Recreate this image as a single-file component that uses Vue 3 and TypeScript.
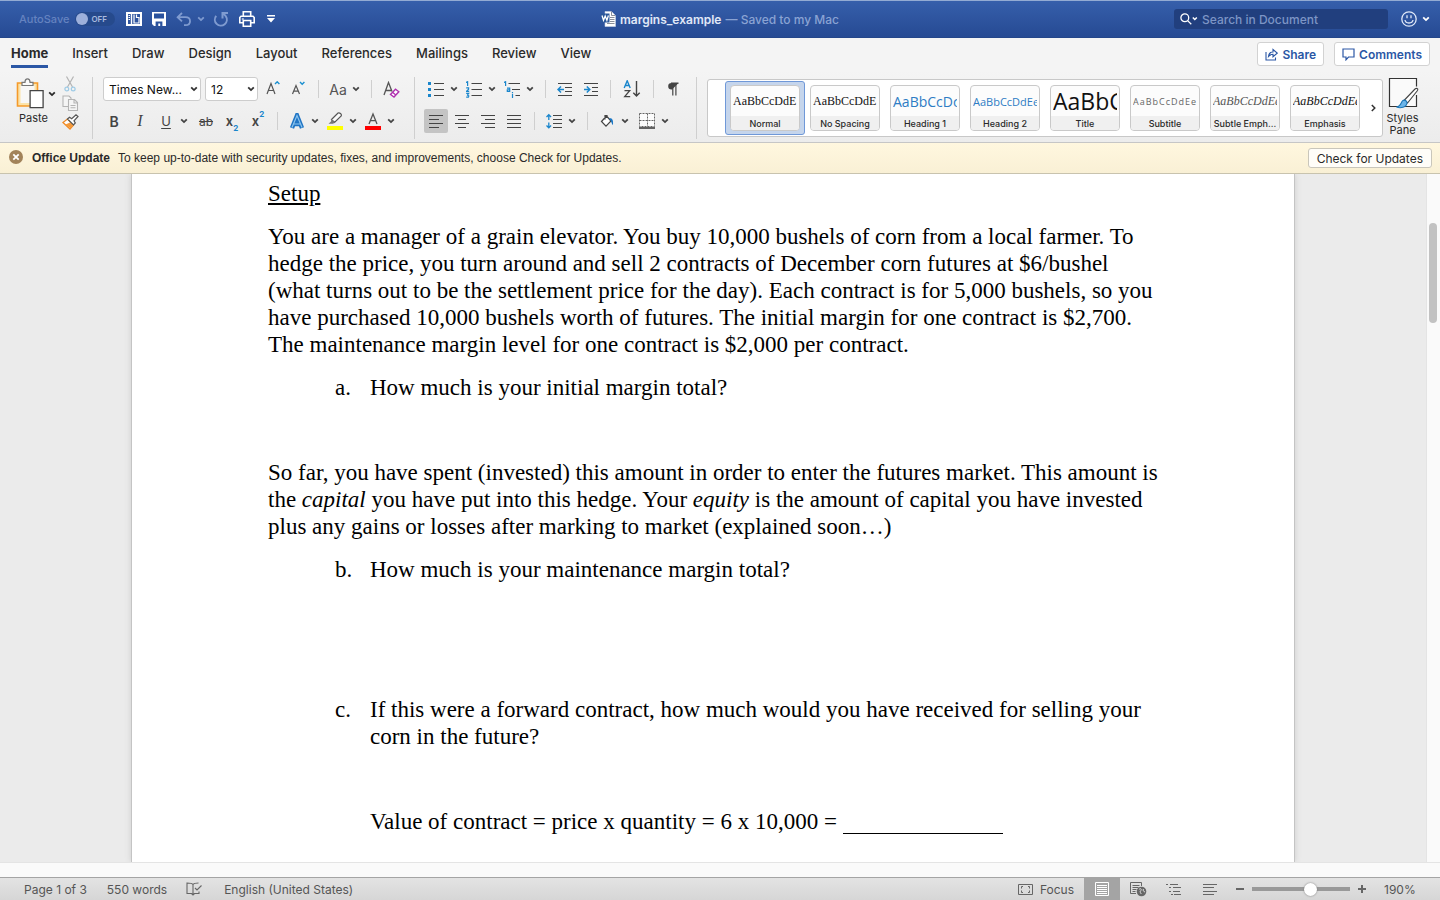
<script setup lang="ts">
import { h, ref } from 'vue'

interface StylePreset {
  name: string
  sample: string
  kind: string
}

const tabs: string[] = ['Home', 'Insert', 'Draw', 'Design', 'Layout', 'References', 'Mailings', 'Review', 'View']
const activeTab = ref('Home')

const presets: StylePreset[] = [
  { name: 'Normal', sample: 'AaBbCcDdE', kind: 'serif' },
  { name: 'No Spacing', sample: 'AaBbCcDdE', kind: 'serif' },
  { name: 'Heading 1', sample: 'AaBbCcDc', kind: 'heading-one' },
  { name: 'Heading 2', sample: 'AaBbCcDdEe', kind: 'heading-two' },
  { name: 'Title', sample: 'AaBbC', kind: 'title' },
  { name: 'Subtitle', sample: 'AaBbCcDdEe', kind: 'subtitle' },
  { name: 'Subtle Emph...', sample: 'AaBbCcDdEe', kind: 'subtle' },
  { name: 'Emphasis', sample: 'AaBbCcDdEe', kind: 'emphasis' },
]
const activePreset = ref('Normal')

const autoSave = ref(false)
const query = ref('')
const zoom = ref(61)
const alignment = ref('left')

const alignments = [
  { id: 'left', label: 'Align left', d: 'M1 2.5h14M1 6.5h10M1 10.5h14M1 14.5h10' },
  { id: 'center', label: 'Center', d: 'M1 2.5h14M4 6.5h8M1 10.5h14M4 14.5h8' },
  { id: 'right', label: 'Align right', d: 'M1 2.5h14M5 6.5h10M1 10.5h14M5 14.5h10' },
  { id: 'justify', label: 'Justify', d: 'M1 2.5h14M1 6.5h14M1 10.5h14M1 14.5h14' },
]

const Chevron = () =>
  h('svg', { width: 8, height: 6, viewBox: '0 0 8 6', fill: 'none', stroke: 'currentColor', 'stroke-width': 1.8 }, [
    h('path', { d: 'M1.2 1.3 4 4.1 6.8 1.3' }),
  ])
</script>

<template>
  <div class="app">
    <header class="titlebar">
      <div class="quick">
        <label class="autosave">
          <span>AutoSave</span>
          <span class="toggle">
            <input v-model="autoSave" type="checkbox" />
            <span class="toggle-text">OFF</span>
          </span>
        </label>
        <button class="tb" aria-label="Document templates">
          <svg width="16" height="14" viewBox="0 0 16 14" fill="none" stroke="#fff">
            <path d="M1 1h14v12H1z" stroke-width="2" />
            <path d="M5.500 1v12" stroke-width="1.400" />
            <path d="M2.500 3.500h1.500M2.500 5.500h1.500M2.500 7.500h1.500" stroke-width="1.100" />
            <path d="M8 2.500v8.500h5V5.500h-2.500V2.500" stroke-width="1.200" />
          </svg>
        </button>
        <button class="tb" aria-label="Save">
          <svg width="14" height="14" viewBox="0 0 14 14">
            <path d="M0 0h14v14H2l-2-2z" fill="#fff" />
            <path d="M2 1.600h10v4.900H2zM3.600 9.500h6.800V14H8.200v-2.600H6.300V14H3.600z" fill="#2a529d" />
          </svg>
        </button>
        <span class="split undo">
          <button class="tb dim" aria-label="Undo">
            <svg width="16" height="15" viewBox="0 0 16 15" fill="none" stroke="currentColor" stroke-width="1.800">
              <path d="M6 1 1.600 5.200 6 9.400M1.800 5.200h7.600c6.200 0 6.200 8 0 8H8" />
            </svg>
          </button>
          <button class="tb dim" aria-label="Undo history"><Chevron /></button>
        </span>
        <button class="tb dim" aria-label="Repeat">
          <svg width="16" height="16" viewBox="0 0 16 16" fill="none" stroke="currentColor" stroke-width="2">
            <path d="M3.200 4.800A6 6 0 1 0 12.800 5.200C12 4 11 3 9.500 2.500M9.500 7.500V2h5.500" />
          </svg>
        </button>
        <button class="tb" aria-label="Print">
          <svg width="16" height="16" viewBox="0 0 16 16" fill="none" stroke="#fff" stroke-width="1.600">
            <path d="M4.300 5V.8h7.400V5M4 11.700H.8V6.500L2 5.300h12l1.200 1.200v5.200H12M4.300 9.500h7.400v5.700H4.300z" />
            <path d="M2.800 8h2" stroke-width="1.200" />
          </svg>
        </button>
        <button class="tb more" aria-label="Customize toolbar">
          <svg width="8" height="8" viewBox="0 0 8 8"><path d="M0 0h8v1.500H0zM0 3h8L4 7.500z" fill="#fff" /></svg>
        </button>
      </div>
      <div class="doc-title">
        <svg width="15" height="16" viewBox="0 0 15 16">
          <path d="M4 .5h6.500L14.500 4.500v11H4z" fill="#fff" stroke="#c9d3e6" stroke-width=".6" />
          <path d="M10.500.5v4h4M9 6.500h4.500M9 8.500h4.500M9 10.500h4.500M6 12.500h7.500" stroke="#6d7480" stroke-width=".8" fill="none" />
          <path d="M0 2.500h8.500v9H0z" fill="#2b579a" />
          <path d="m1 4.500 1.500 4.800L4.200 5l1.700 4.300L7.400 4.500" fill="none" stroke="#fff" stroke-width="1.300" />
        </svg>
        <span class="name">margins_example</span>
        <span class="saved">— Saved to my Mac</span>
      </div>
      <div class="title-right">
        <label class="search">
          <svg width="18" height="12" viewBox="0 0 18 12" fill="none" stroke="#fff" stroke-width="1.300">
            <circle cx="4.800" cy="4.800" r="3.900" />
            <path d="m7.600 7.600 3.700 3.700" /><path d="m12.800 4.500 2 2 2-2" stroke-width="1.500" />
          </svg>
          <input v-model="query" type="text" placeholder="Search in Document" aria-label="Search in Document" />
        </label>
        <button class="tb face" aria-label="Feedback">
          <svg width="16" height="16" viewBox="0 0 16 16" fill="none" stroke="#dfe8f8" stroke-width="1.300">
            <circle cx="8" cy="8" r="7.200" /><path d="M4 9c.6 4 7.400 4 8 0M6 4.300v3M10 4.300v3" />
          </svg>
          <Chevron />
        </button>
      </div>
    </header>

    <nav class="tabs">
      <button
        v-for="t in tabs"
        :key="t"
        class="tab"
        :class="{ active: activeTab === t }"
        @click="activeTab = t"
      >
        {{ t }}
      </button>
      <span class="spacer"></span>
      <button class="pill">
        <svg width="13" height="13" viewBox="0 0 13 13" fill="none" stroke="currentColor" stroke-width="1.100">
          <path d="M1 4v8h9.500V9.500M3.500 8.500C3.800 5.500 5.500 4 8 4V1.500l4.200 3.600L8 8.700V6.300c-2 0-3.200.5-4.500 2.200z" />
        </svg>
        Share
      </button>
      <button class="pill">
        <svg width="13" height="13" viewBox="0 0 13 13" fill="none" stroke="currentColor" stroke-width="1.200">
          <path d="M1 1h11v8H6.500L4 11.800V9H1z" />
        </svg>
        Comments
      </button>
    </nav>

    <section class="ribbon">
      <div class="clipboard">
        <button class="paste">
          <span class="paste-top">
            <svg width="28" height="31" viewBox="0 0 28 31" fill="none">
              <path d="M1.500 5h20v23H1.500z" fill="#fbe3a9" stroke="#f59a2a" stroke-width="1.600" />
              <path d="M4.500 7.500h14V25h-14z" fill="#f7f7f7" />
              <path d="M6 7.500V4.300h3C9-.2 14-.2 14 4.300h3v3.200z" fill="#fafafa" stroke="#777" stroke-width="1.200" />
              <path d="M14.100 12.600h13v17h-13z" fill="#fff" stroke="#444" stroke-width="1.300" />
            </svg>
            <Chevron />
          </span>
          Paste
        </button>
        <div class="clip-col">
          <button class="ib" aria-label="Cut">
            <svg width="12" height="16" viewBox="0 0 12 16" fill="none" stroke="#b4b4b4" stroke-width="1.200">
              <path d="M2.500.5 8.500 11M9.500.5 3.500 11" />
              <circle cx="2.800" cy="13" r="1.900" stroke="#9ecbe6" /><circle cx="9.200" cy="13" r="1.900" stroke="#9ecbe6" />
            </svg>
          </button>
          <button class="ib" aria-label="Copy">
            <svg width="17" height="16" viewBox="0 0 17 16" fill="#f5f5f5" stroke="#b4b4b4" stroke-width="1.100">
              <path d="M1 1h6l2 2v8.500H1z" /><path d="M6.500 4.500h6l3 3v8h-9zM12 4.500V8h3.500M8.500 10.500h5M8.500 12.800h5" />
            </svg>
          </button>
          <button class="ib" aria-label="Format painter">
            <svg width="17" height="16" viewBox="0 0 17 16">
              <path d="M1 8.500 5.500 5l6 6L8 15z" fill="#fff" stroke="#f08a24" stroke-width="1.300" />
              <path d="m3.500 10.500 5 4L11 11 8 8.500z" fill="#f59a3a" />
              <path d="m5.500 5 2-1.800 2.200 1.600L14 .8l2 1.700-4 4.300 1.300 2.200-1.800 2z" fill="#fff" stroke="#555" stroke-width="1.200" />
            </svg>
          </button>
        </div>
      </div>

      <span class="divider"></span>

      <div class="group">
        <div class="row wide">
          <label class="combo font-name">
            <select aria-label="Font"><option>Times New...</option></select>
            <Chevron />
          </label>
          <label class="combo font-size">
            <select aria-label="Font size"><option>12</option></select>
            <Chevron />
          </label>
          <span class="grow-pair">
            <button class="ib" aria-label="Increase font size">
              <svg width="16" height="16" viewBox="0 0 16 16" fill="none">
                <path d="M2 13 6 2.500 10 13M3.500 9.500h5" stroke="#555" stroke-width="1.200" />
                <path d="m10 3 2.200-2.200L14.400 3" stroke="#1a8fd0" stroke-width="1.400" />
              </svg>
            </button>
            <button class="ib" aria-label="Decrease font size">
              <svg width="16" height="16" viewBox="0 0 16 16" fill="none">
                <path d="M1.500 13 5 4.500 8.500 13M2.700 10.200h4.600" stroke="#555" stroke-width="1.200" />
                <path d="m9 1 2.200 2.200L13.400 1" stroke="#1a8fd0" stroke-width="1.400" />
              </svg>
            </button>
          </span>
          <span class="sep"></span>
          <span class="split">
            <button class="ib case" aria-label="Change case">Aa</button>
            <button class="ch" aria-label="Case options"><Chevron /></button>
          </span>
          <span class="sep"></span>
          <button class="ib" aria-label="Clear formatting">
            <svg width="17" height="17" viewBox="0 0 17 17" fill="none">
              <path d="M1 14 5.500 1.500 9 10.500M2.600 9.500h5.500" stroke="#555" stroke-width="1.300" />
              <path d="m7.500 13.500 5-5.300 3.300 2.600L11 16z" fill="#fff" stroke="#b030b0" stroke-width="1.400" />
              <path d="m9.500 11.200 3.300 2.900" stroke="#b030b0" stroke-width="1.300" />
            </svg>
          </button>
        </div>
        <div class="row wide">
          <button class="ib bold">B</button>
          <button class="ib italic">I</button>
          <span class="split">
            <button class="ib under">U</button>
            <button class="ch" aria-label="Underline options"><Chevron /></button>
          </span>
          <button class="ib strike">ab</button>
          <button class="ib script" aria-label="Subscript">
            <span>x</span><small class="down">2</small>
          </button>
          <button class="ib script" aria-label="Superscript">
            <span>x</span><small class="up">2</small>
          </button>
          <span class="sep"></span>
          <span class="tight">
            <span class="split">
              <button class="ib" aria-label="Text effects">
                <svg width="16" height="16" viewBox="0 0 16 16" fill="none">
                  <path d="M3 15 8 2.500 13 15M5 11h6" stroke="#1f74c4" stroke-width="4.400" />
                  <path d="M3 14.500 8 2.500l5 12M5 11h6" stroke="#8cc4ee" stroke-width="1.200" />
                </svg>
              </button>
              <button class="ch" aria-label="Effect options"><Chevron /></button>
            </span>
            <span class="split">
              <button class="ib" aria-label="Highlight">
                <svg width="16" height="18" viewBox="0 0 16 18">
                  <path d="m4.500 7.500 6.500-6.500c1.500-.8 4 1 3.200 3L7.500 10.500z" fill="#fafafa" stroke="#555" stroke-width="1.200" />
                  <path d="M4.500 7 8 10.500l-2 1.300-4.500 0L4 9.500z" fill="#777" />
                  <path d="M0 14h16v4H0z" fill="#ff0" />
                </svg>
              </button>
              <button class="ch" aria-label="Highlight colors"><Chevron /></button>
            </span>
            <span class="split">
              <button class="ib" aria-label="Font color">
                <svg width="16" height="18" viewBox="0 0 16 18">
                  <path d="M4 12 8 2l4 10M5.300 8.600h5.400" fill="none" stroke="#555" stroke-width="1.300" />
                  <path d="M0 14h16v4H0z" fill="#f00" />
                </svg>
              </button>
              <button class="ch" aria-label="Font colors"><Chevron /></button>
            </span>
          </span>
        </div>
      </div>

      <span class="divider"></span>

      <div class="group">
        <div class="row">
          <span class="split">
            <button class="ib" aria-label="Bullets">
              <svg width="16" height="16" viewBox="0 0 16 16">
                <path d="M0 1h3v3H0zM0 7h3v3H0zM0 13h3v3H0z" fill="#1a86cc" />
                <path d="M6 2.500h10M6 8.500h10M6 14.500h10" stroke="#444" stroke-width="1.200" />
              </svg>
            </button>
            <button class="ch" aria-label="Bullet library"><Chevron /></button>
          </span>
          <span class="split">
            <button class="ib" aria-label="Numbering">
              <svg width="16" height="17" viewBox="0 0 16 17" fill="none">
                <path d="M0 1.500 1.600.7V5M.2 6.900h2.400v1.300L.5 10.400h2.700M.2 12.400h2.500L1.500 14l1.300.9-.4 1.300H.2" stroke="#1a86cc" stroke-width="1.200" />
                <path d="M5.500 2.500H16M5.500 8.500H16M5.500 14.500H16" stroke="#444" stroke-width="1.200" />
              </svg>
            </button>
            <button class="ch" aria-label="Numbering library"><Chevron /></button>
          </span>
          <span class="split">
            <button class="ib" aria-label="Multilevel list">
              <svg width="16" height="17" viewBox="0 0 16 17" fill="none">
                <path d="M0 1.500 1.600.7V5M3 7.200h2.700v3.300H3.300V8.800h2.400M8.500 13v4M8.500 11v1.200" stroke="#1a86cc" stroke-width="1.200" />
                <path d="M4.500 2.500H16M8 8.500h8M11.500 14.500H16" stroke="#444" stroke-width="1.200" />
              </svg>
            </button>
            <button class="ch" aria-label="List library"><Chevron /></button>
          </span>
          <span class="sep"></span>
          <span class="row wide">
            <button class="ib" aria-label="Decrease indent">
              <svg width="16" height="16" viewBox="0 0 16 16" fill="none">
                <path d="M1 2.500h14M8 6.500h7M8 10.500h7M1 14.500h14" stroke="#444" stroke-width="1.200" />
                <path d="M7 8.500H1.500M4 5.500l-3 3 3 3" stroke="#1a86cc" stroke-width="1.500" />
              </svg>
            </button>
            <button class="ib" aria-label="Increase indent">
              <svg width="16" height="16" viewBox="0 0 16 16" fill="none">
                <path d="M1 2.500h14M9 6.500h6M9 10.500h6M1 14.500h14" stroke="#444" stroke-width="1.200" />
                <path d="M1 8.500h5.500M3.800 5.500l3 3-3 3" stroke="#1a86cc" stroke-width="1.500" />
              </svg>
            </button>
          </span>
          <span class="sep"></span>
          <button class="ib sort" aria-label="Sort">
            <svg width="18" height="18" viewBox="0 0 18 18" fill="none">
              <path d="M1.200 8 4.200.8 7.200 8M2.200 5.500h4" stroke="#1a86cc" stroke-width="1.400" />
              <path d="M1.500 10.600h5.200l-5 6h5.500" stroke="#444" stroke-width="1.300" />
              <path d="M13.500 1v15M10.300 12.800l3.200 3.200 3.200-3.200" stroke="#444" stroke-width="1.400" />
            </svg>
          </button>
          <span class="sep"></span>
          <button class="ib" aria-label="Show formatting marks">
            <svg width="12" height="14" viewBox="0 0 12 14">
              <path d="M11.500 1H4.500a3.300 3.300 0 0 0 0 6.600H5z" fill="#444" />
              <path d="M5.800 1v12.500M8.900 1v12.500M4 1.200h7.500" stroke="#444" stroke-width="1.200" fill="none" />
            </svg>
          </button>
        </div>
        <div class="row second">
          <button
            v-for="a in alignments"
            :key="a.id"
            class="ib align"
            :class="{ on: alignment === a.id }"
            :aria-label="a.label"
            @click="alignment = a.id"
          >
            <svg width="16" height="16" viewBox="0 0 16 16" fill="none" stroke="#444" stroke-width="1.200">
              <path :d="a.d" />
            </svg>
          </button>
          <span class="sep"></span>
          <span class="split">
            <button class="ib" aria-label="Line spacing">
              <svg width="16" height="16" viewBox="0 0 16 16" fill="none">
                <path d="M7 2.500h9M7 6.500h9M7 10.500h9M7 14.500h9" stroke="#444" stroke-width="1.200" />
                <path d="M2.800 2v5M.5 4 2.800 1.700 5.100 4M2.800 9.500v5M.5 12.500l2.300 2.300 2.300-2.300" stroke="#1a86cc" stroke-width="1.300" />
              </svg>
            </button>
            <button class="ch" aria-label="Spacing options"><Chevron /></button>
          </span>
          <span class="sep"></span>
          <span class="row wide">
            <span class="split">
              <button class="ib" aria-label="Shading">
                <svg width="14" height="14" viewBox="0 0 14 14" fill="none">
                  <path d="m1.500 7.500 5-5.500 4.500 5-5 5.200zM5 5.500V1.500h2V4" fill="#fff" stroke="#444" stroke-width="1.200" />
                  <path d="M9 4.500c3-1 4.500 1 4 6.500-1 0-1.500-3-2.500-4.500z" fill="#1a76c4" />
                </svg>
              </button>
              <button class="ch" aria-label="Shading colors"><Chevron /></button>
            </span>
            <span class="split">
              <button class="ib" aria-label="Borders">
                <svg width="16" height="16" viewBox="0 0 16 16" fill="#fcfcfc" stroke="#666">
                  <path d="M.5.500h15v13H.5zM8.500.5v13M.5 7.500h15" stroke-dasharray="2 1" />
                  <path d="M0 15h16" stroke="#333" stroke-width="1.500" />
                </svg>
              </button>
              <button class="ch" aria-label="Border options"><Chevron /></button>
            </span>
          </span>
        </div>
      </div>

      <span class="divider last"></span>

      <div class="gallery">
        <button
          v-for="p in presets"
          :key="p.name"
          class="tile"
          :class="{ on: activePreset === p.name }"
          @click="activePreset = p.name"
        >
          <span class="card">
            <span class="sample"><span :class="p.kind">{{ p.sample }}</span></span>
            <span class="caption">{{ p.name }}</span>
          </span>
        </button>
        <button class="next" aria-label="More styles">
          <svg width="5" height="8" viewBox="0 0 5 8" fill="none" stroke="#333" stroke-width="1.500"><path d="m.8 1 3 3-3 3" /></svg>
        </button>
      </div>

      <button class="pane">
        <svg width="32" height="32" viewBox="0 0 32 32">
          <path d="M29.500 18v11.500H2.500v-28h27v8" fill="#fafafa" stroke="#333" stroke-width="1.200" />
          <path d="M17 23.500 28 12c1.500-1.300 3.500-.5 2.500 1.500L20.500 26z" fill="#fff" stroke="#444" stroke-width="1.100" />
          <path d="M9.500 30c4 1.500 10 .5 10.500-4 .3-2.500-3.500-4-5-1.500-1 2-2 5-5.500 5.500z" fill="#6cb4e8" stroke="#1a76b8" stroke-width="1.100" />
        </svg>
        <span>Styles<br />Pane</span>
      </button>
    </section>

    <aside class="notice">
      <button class="dismiss" aria-label="Dismiss">
        <svg width="14" height="14" viewBox="0 0 14 14">
          <circle cx="7" cy="7" r="7" fill="#a2835a" /><path d="m4.300 4.300 5.400 5.400M9.700 4.300 4.300 9.700" stroke="#fff" stroke-width="1.800" />
        </svg>
      </button>
      <strong>Office Update</strong>
      <span>To keep up-to-date with security updates, fixes, and improvements, choose Check for Updates.</span>
      <button class="check">Check for Updates</button>
    </aside>

    <main class="workspace">
      <div class="canvas">
        <article class="page">
          <h1>Setup</h1>
          <p>
            You are a manager of a grain elevator. You buy 10,000 bushels of corn from a local farmer. To hedge the
            price, you turn around and sell 2 contracts of December corn futures at $6/bushel (what turns out to be the
            settlement price for the day). Each contract is for 5,000 bushels, so you have purchased 10,000 bushels
            worth of futures. The initial margin for one contract is $2,700. The maintenance margin level for one
            contract is $2,000 per contract.
          </p>
          <div class="item"><span>a.</span><p>How much is your initial margin total?</p></div>
          <p class="after-one">
            So far, you have spent (invested) this amount in order to enter the futures market. This amount is the
            <em>capital</em> you have put into this hedge. Your <em>equity</em> is the amount of capital you have
            invested plus any gains or losses after marking to market (explained soon…)
          </p>
          <div class="item"><span>b.</span><p>How much is your maintenance margin total?</p></div>
          <div class="item after-three">
            <span>c.</span>
            <p>If this were a forward contract, how much would you have received for selling your corn in the future?</p>
          </div>
          <div class="item after-one">
            <span></span><p>Value of contract = price x quantity = 6 x 10,000 = <span class="blank"></span></p>
          </div>
        </article>
      </div>
      <div class="scroll"><span class="thumb"></span></div>
    </main>
    <div class="hscroll"></div>

    <footer class="status">
      <span>Page 1 of 3</span>
      <span class="words">550 words</span>
      <svg class="proof" width="16" height="14" viewBox="0 0 16 14" fill="none" stroke="#666" stroke-width="1.100">
        <path d="M7 13V2.500C6 1 3 1 1 1v10.500h4.500L7 13l1.500-1.500H13V9.500M7 2.500C8 1 10 1 12.500 1M9 6l2 2 4.500-4.500" />
      </svg>
      <span>English (United States)</span>
      <span class="spacer"></span>
      <button class="focus">
        <svg width="15" height="11" viewBox="0 0 15 11" fill="none" stroke="#666">
          <path d="M.5.500h14v10H.5zM3.500 4.500v-2h1.500M10 2.500h1.500v2M11.500 6.500v2H10M5 8.500H3.500v-2" />
        </svg>
        Focus
      </button>
      <button class="view on" aria-label="Print layout">
        <svg width="14" height="14" viewBox="0 0 14 14" fill="none" stroke="#fff">
          <path d="M.5.500h13v13H.5zM2 3.500h10M2 5.500h10M2 7.500h10M2 9.500h10M2 11.500h10" />
        </svg>
      </button>
      <button class="view" aria-label="Web layout">
        <svg width="17" height="15" viewBox="0 0 17 15" fill="none" stroke="#666">
          <path d="M6 11.500H.5v-11h11V4M2.500 3.500h7M2.500 5.500h6M2.500 7.500h4M2.500 9.500h3" /><circle cx="11.500" cy="9.500" r="4.800" fill="#666" stroke="none" />
          <path d="M9 7.500c2-2 3 0 1.500 1.500s1 1.500.5 3M13.500 7c-1 1.500 0 2.500 1.500 3" stroke="#ddd" />
        </svg>
      </button>
      <button class="view" aria-label="Outline">
        <svg width="16" height="11" viewBox="0 0 16 11" stroke="#666" stroke-width="1.200">
          <path d="M0 .5h2M4 .5h8M3 3.500h2M7 3.500h8M3 7.500h2M7 7.500h7M5 10.500h2M8 10.500h7" />
        </svg>
      </button>
      <button class="view" aria-label="Draft">
        <svg width="14" height="11" viewBox="0 0 14 11" stroke="#666" stroke-width="1.200">
          <path d="M0 .5h14M0 3.500h11M0 7.500h14M0 10.500h11" />
        </svg>
      </button>
      <button class="step" aria-label="Zoom out">
        <svg width="8" height="8" viewBox="0 0 8 8" stroke="#666" stroke-width="2"><path d="M0 4h8" /></svg>
      </button>
      <input v-model="zoom" class="slider" type="range" min="0" max="100" aria-label="Zoom" />
      <button class="step" aria-label="Zoom in">
        <svg width="8" height="8" viewBox="0 0 8 8" stroke="#666" stroke-width="2"><path d="M0 4h8M4 0v8" /></svg>
      </button>
      <span class="percent">190%</span>
    </footer>
  </div>
</template>

<style>
body {
  margin: 0;
}
</style>

<style scoped>
.app {
  display: flex;
  flex-direction: column;
  height: 100vh;
  overflow: hidden;
  font-family: Inter, 'Liberation Sans', sans-serif;
  font-size: 12px;
  color: #2a2a2a;
  background: #f4f4f4;
}
button {
  display: flex;
  align-items: center;
  justify-content: center;
  padding: 0;
  border: 0;
  background: none;
  font: inherit;
  color: inherit;
}
svg {
  flex: none;
}
.spacer {
  flex: 1;
}

/* Title bar */
.titlebar {
  display: grid;
  grid-template-columns: 1fr auto 1fr;
  align-items: center;
  flex: none;
  height: 38px;
  box-sizing: border-box;
  border-top: 1px solid #93abd3;
  border-bottom: 1px solid #24468a;
  background: linear-gradient(#365fab, #264a93);
}
.quick {
  display: flex;
  align-items: center;
  gap: 10px;
  padding-left: 19px;
}
.autosave {
  display: flex;
  align-items: center;
  gap: 6px;
  margin-right: 1px;
  font-size: 11px;
  font-weight: 500;
  color: #6583c0;
}
.toggle {
  display: flex;
  align-items: center;
  width: 40px;
  height: 14px;
  border-radius: 7px;
  background: #264a8c;
}
.toggle input {
  appearance: none;
  width: 12px;
  height: 12px;
  margin: 0 3px 0 1px;
  border-radius: 6px;
  background: #9db0db;
}
.toggle-text {
  font-size: 8px;
  font-weight: 600;
  color: #a9bbdf;
}
.tb {
  color: #fff;
}
.dim {
  color: #7f9bd0;
}
.split {
  display: flex;
  align-items: center;
}
.undo {
  gap: 5px;
  margin-right: -2px;
}
.more {
  margin-left: 2px;
}
.doc-title {
  display: flex;
  align-items: center;
  gap: 4px;
  white-space: nowrap;
}
.name {
  font-weight: 600;
  color: #e0e8f7;
}
.saved {
  font-weight: 500;
  color: #8aa3d3;
}
.title-right {
  display: flex;
  justify-content: flex-end;
  align-items: center;
  gap: 13px;
  padding-right: 10px;
}
.search {
  display: flex;
  align-items: center;
  gap: 4px;
  width: 208px;
  height: 20px;
  padding-left: 6px;
  border-radius: 3px;
  background: #213f7e;
}
.search input {
  flex: 1;
  min-width: 0;
  padding: 0;
  border: 0;
  outline: 0;
  background: none;
  font: inherit;
  font-weight: 500;
  color: #fff;
}
.search input::placeholder {
  color: #7d95c5;
}
.face {
  gap: 5px;
}

/* Tabs */
.tabs {
  display: flex;
  align-items: center;
  flex: none;
  gap: 24px;
  height: 32px;
  padding: 0 10px 0 11px;
  background: #f4f4f4;
}
.tab {
  height: 28px;
  border-bottom: 3px solid transparent;
  font-size: 13px;
  font-weight: 500;
}
.tab.active {
  font-weight: 700;
  border-bottom-color: #2b57a5;
}
.pill {
  gap: 4px;
  height: 24px;
  margin-left: -14px;
  padding: 0 7px;
  border: 1px solid #d2d2d2;
  border-radius: 3px;
  background: #fff;
  font-weight: 600;
  color: #2b57a5;
}

/* Ribbon */
.ribbon {
  display: flex;
  flex: none;
  height: 72px;
  border-bottom: 1px solid #c6c6c6;
  background: linear-gradient(#f4f4f4, #ececec);
}
.clipboard {
  display: flex;
  padding: 8px 10px 0 16px;
}
.paste {
  flex-direction: column;
  align-self: flex-start;
  align-items: flex-start;
  gap: 1px;
  width: 40px;
  font-size: 11px;
  line-height: 16px;
  text-indent: 3px;
}
.paste-top {
  display: flex;
  align-items: center;
  gap: 4px;
}
.clip-col {
  display: flex;
  flex-direction: column;
  align-items: center;
  gap: 3px;
  width: 28px;
  margin: -2px -2px 0 0;
}
.clip-col .ib {
  height: 16px;
}
.divider {
  width: 1px;
  margin: 7px 10px 3px 0;
  background: #cfcfcf;
}
.group {
  display: flex;
  flex-direction: column;
  gap: 8px;
  padding-top: 7px;
}
.group + .divider {
  margin-left: 12px;
}
.row {
  display: flex;
  align-items: center;
  gap: 2px;
  height: 24px;
}
.wide {
  gap: 4px;
}
.tight {
  display: flex;
  gap: 2px;
}
.row .sep {
  width: 1px;
  height: 18px;
  margin: 0 6px;
  background: #cfcfcf;
}
.group > .wide > .sep {
  margin: 0 4px;
}
.ib {
  width: 22px;
  height: 24px;
  color: #444;
}
.ch {
  width: 14px;
  height: 24px;
  color: #444;
}
.combo {
  position: relative;
  display: flex;
  align-items: center;
  color: #333;
}
.combo select {
  appearance: none;
  width: 100%;
  height: 24px;
  padding: 0 5px;
  border: 1px solid #cdcdcd;
  border-radius: 3px;
  background: #fff;
  font: inherit;
  color: #111;
}
.combo svg {
  position: absolute;
  right: 3px;
  pointer-events: none;
}
.font-name {
  width: 98px;
}
.font-size {
  width: 53px;
}
.grow-pair {
  display: flex;
  gap: 4px;
}
.case {
  font-size: 14px;
  color: #555;
}
.bold {
  font-size: 14px;
  font-weight: 600;
}
.italic {
  font-family: 'Liberation Serif', serif;
  font-size: 16px;
  font-style: italic;
}
.under {
  font-size: 13px;
  text-decoration: underline;
  text-underline-offset: 2px;
}
.strike {
  font-size: 12px;
  text-decoration: line-through;
}
.script {
  font-size: 13px;
  font-weight: 600;
}
.script small {
  font-size: 8px;
  font-weight: 700;
  color: #1a86cc;
}
.down {
  align-self: flex-end;
}
.up {
  align-self: flex-start;
}
.sort {
  width: 26px;
}
.second {
  margin-left: -1px;
}
.align {
  width: 24px;
  border-radius: 2px;
}
.align.on {
  background: #c4c4c4;
}
.gallery {
  display: flex;
  flex: 1;
  align-items: center;
  height: 58px;
  margin-top: 9px;
  padding-left: 17px;
  box-sizing: border-box;
  min-width: 0;
  border: 1px solid #c8c8c8;
  border-radius: 3px;
  background: #fff;
}
.tile {
  flex: none;
  width: 80px;
  height: 54px;
  border: 1px solid transparent;
  border-radius: 3px;
}
.tile.on {
  border-color: #6f98d8;
  background: #c5d5ec;
}
.card {
  display: flex;
  flex-direction: column;
  width: 70px;
  height: 46px;
  box-sizing: border-box;
  overflow: hidden;
  border: 1px solid #c9c9c9;
  border-radius: 4px;
  background: #fcfcfc;
}
.sample {
  display: flex;
  align-items: center;
  height: 30px;
  margin: 0 2px;
  overflow: hidden;
  white-space: nowrap;
  color: #111;
}
.caption {
  height: 14px;
  background: #f0f0f0;
  font-size: 9px;
  line-height: 15px;
  font-weight: 500;
  white-space: nowrap;
}
.serif {
  font: 12px 'Liberation Serif', serif;
}
.heading-one {
  font: 14px 'Open Sans', sans-serif;
  color: #2e7cc4;
}
.heading-two {
  font: 11px 'Open Sans', sans-serif;
  color: #2e7cc4;
}
.title {
  font: 23px 'Open Sans', sans-serif;
}
.subtitle {
  font: 9px 'Open Sans', sans-serif;
  letter-spacing: 1px;
  color: #666;
}
.subtle {
  font: italic 12px 'Liberation Serif', serif;
  color: #555;
}
.emphasis {
  font: italic 12px 'Liberation Serif', serif;
}
.next {
  flex: 1;
}
.pane {
  flex-direction: column;
  justify-content: flex-start;
  width: 57px;
  box-sizing: border-box;
  padding: 7px 18px 0 0;
  font-size: 11px;
  line-height: 12px;
  gap: 3px;
}

/* Update notice */
.notice {
  display: flex;
  align-items: center;
  flex: none;
  height: 30px;
  padding: 0 8px 0 9px;
  border-bottom: 1px solid #c8c3ae;
  background: linear-gradient(#fff7df, #f9f0d5);
  font: 12px 'Liberation Sans', sans-serif;
}
.dismiss {
  margin: 0 9px 2px 0;
}
.notice strong {
  margin-right: 8px;
}
.check {
  height: 20px;
  margin-left: auto;
  padding: 0 8px;
  border: 1px solid #c9c6bb;
  border-radius: 3px;
  background: #fffdf8;
  font: 12px Inter, sans-serif;
}

/* Document */
.workspace {
  display: flex;
  flex: 1;
  min-height: 0;
  background: #ebebeb;
}
.canvas {
  flex: 1;
  overflow: hidden;
  padding: 0 131px;
}
.page {
  min-height: 100%;
  box-sizing: border-box;
  padding: 6px 132px 0 136px;
  border: solid #c4c4c4;
  border-width: 0 1px;
  background: #fff;
  box-shadow: 0 0 6px #ccc;
  font: 23px/27px 'Liberation Serif', serif;
  color: #000;
}
.page h1 {
  margin: 0;
  font-size: inherit;
  font-weight: 400;
  text-decoration: underline;
}
.page > * {
  margin: 16px 0 0;
}
.page p {
  margin-bottom: 0;
}
.item {
  display: flex;
}
.item > span {
  flex: none;
  width: 35px;
  padding-left: 67px;
}
.item p {
  margin: 0;
}
.page > .after-one {
  margin-top: 58px;
}
.page > .after-three {
  margin-top: 113px;
}
.blank {
  display: inline-block;
  width: 160px;
  height: 4px;
  border-bottom: 1px solid #000;
  vertical-align: -5px;
}
.scroll {
  width: 13px;
  padding-top: 49px;
  border-left: 1px solid #e4e4e4;
  background: #fafafa;
}
.thumb {
  display: block;
  width: 8px;
  height: 100px;
  margin-left: 2px;
  border-radius: 4px;
  background: #c2c2c2;
}
.hscroll {
  flex: none;
  height: 14px;
  border-top: 1px solid #e4e4e4;
  background: #fafafa;
}

/* Status bar */
.status {
  display: flex;
  align-items: center;
  flex: none;
  height: 22px;
  padding: 0 25px 0 24px;
  border-top: 1px solid #a4a4a4;
  background: linear-gradient(#e3e3e3, #d6d6d6);
  color: #555;
}
.words {
  margin-left: 20px;
}
.proof {
  margin: 0 22px 0 19px;
}
.focus {
  gap: 7px;
  margin-right: 10px;
}
.view {
  width: 36px;
  height: 22px;
}
.view.on {
  background: #a4a4a4;
}
.step {
  width: 24px;
}
.slider {
  appearance: none;
  width: 98px;
  height: 14px;
  margin: 0;
  background: linear-gradient(#999, #999) center / 100% 4px no-repeat;
}
.slider::-webkit-slider-thumb {
  appearance: none;
  width: 13px;
  height: 13px;
  border-radius: 7px;
  background: #fff;
  box-shadow: 0 0 2px #777;
}
.percent {
  width: 31px;
  margin-left: 10px;
}
</style>
